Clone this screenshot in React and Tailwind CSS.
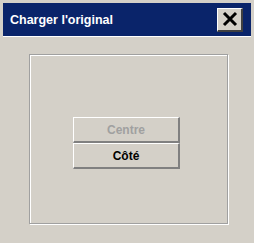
import React from 'react';

const Btn = ({ label, disabled }) => (
  <div className="h-[26px] flex items-center justify-center border-t border-l border-t-white border-l-white border-b-2 border-r-2 border-b-[#808080] border-r-[#808080] bg-[#d4d0c8] text-[12px] font-bold">
    <span className={disabled ? 'text-[#a0a0a0]' : 'text-black'}>{label}</span>
  </div>
);

export default function App() {
  return (
    <div className="w-[254px] h-[243px] bg-[#d4d0c8] p-[3px] flex flex-col" style={{ fontFamily: '"DejaVu Sans", "Liberation Sans", Arial, sans-serif' }}>
      <div className="h-[33px] bg-[#0a246a] flex items-center justify-between pl-[7px] pr-[8px]">
        <span className="text-white font-bold text-[12px] pt-px" style={{ fontFamily: '"Liberation Sans", Arial, sans-serif', fontSize: '12.5px' }}>Charger l'original</span>
        <div className="w-[26px] h-[24px] bg-[#d4d0c8] border-t border-l border-t-white border-l-white border-b-2 border-r-2 border-b-[#404040] border-r-[#404040] flex items-center justify-center">
          <svg width="16" height="16" viewBox="0 0 16 16">
            <path d="M2 2 L14 14 M14 2 L2 14" stroke="black" strokeWidth="3" />
          </svg>
        </div>
      </div>
      <div className="h-px bg-white" />
      <div className="flex-1 pt-[17px] pl-[26px] pr-[23px] pb-[16px]">
        <div className="h-full border border-[#a0a0a0] shadow-[inset_1px_1px_0_#fff,1px_1px_0_#fff] flex flex-col pt-[62px] pl-[43px]">
          <div className="w-[107px] flex flex-col" style={{ fontFamily: '"Liberation Sans", Arial, sans-serif' }}>
            <Btn label="Centre" disabled />
            <Btn label="Côté" />
          </div>
        </div>
      </div>
    </div>
  );
}
